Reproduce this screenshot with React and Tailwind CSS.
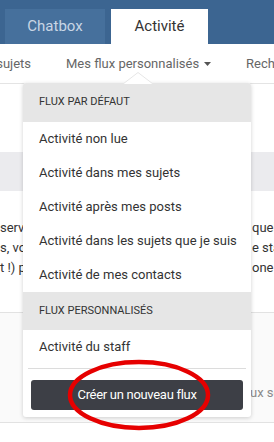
import React from 'react';

export default function App() {
    const defaults = [
        'Activité non lue',
        'Activité dans mes sujets',
        'Activité après mes posts',
        'Activité dans les sujets que je suis',
        'Activité de mes contacts',
    ];

    const lines = [
        ['serve les derniers', 'quelques'],
        ['s, vous pouvez', 'e statut'],
        ['t !) pour', 'one'],
    ];

    return (
        <div className="relative h-[442px] w-[274px] overflow-hidden bg-white font-['Roboto',sans-serif]">
            {/* top tabs */}
            <div className="flex h-[44px] items-end gap-[6px] bg-[#3c6591] pl-[5px]">
                <div className="flex h-[35px] w-[100px] items-center justify-center bg-[#46709c] text-[15px] text-[#c9d6e5]">
                    Chatbox
                </div>
                <div className="flex h-[35px] w-[97px] items-center justify-center bg-white text-[15px] text-[#333]">
                    Activité
                </div>
            </div>

            {/* sub nav */}
            <div className="flex h-[40px] items-center whitespace-nowrap border-b border-[#e4e4e4] text-[13px] text-[#666]">
                <span className="ml-[-32px] w-[98px] shrink-0">Mes sujets</span>
                <span className="flex w-[180px] shrink-0 items-center gap-[5px]">
                    Mes flux personnalisés
                    <svg width="7" height="4" viewBox="0 0 7 4">
                        <path d="M0 0h7L3.5 4z" fill="#555" />
                    </svg>
                </span>
                <span>Recherche</span>
            </div>

            <div className="h-[68px]" />
            <div className="h-[39px] bg-[#ebebee]" />

            <div className="h-[121px] pt-[27px] text-[13px] leading-[20px] text-[#333]">
                {lines.map(([left, right], i) => (
                    <div key={i} className="flex whitespace-nowrap">
                        <span className="w-[252px] shrink-0 overflow-hidden">{left}</span>
                        <span>{right}</span>
                    </div>
                ))}
            </div>

            <div className="h-[111px] whitespace-nowrap border-y border-[#e2e2e2] bg-[#fafafa] pl-[250px] pt-[72px] text-[13px] leading-[16px] text-[#8a8a8a]">
                ux sera
            </div>

            {/* dropdown */}
            <div className="absolute left-[23px] top-[83px] w-[228px] rounded-[3px] bg-white shadow-[0_1px_4px_rgba(0,0,0,0.18)]">
                <svg className="absolute left-[100px] top-[-11px]" width="30" height="12" viewBox="0 0 30 12">
                    <path d="M0 12L15 0.5L30 12" fill="#ffffff" stroke="#e6e6e6" />
                </svg>
                <div className="flex h-[39px] items-center rounded-t-[3px] bg-[#e6e6e6] px-[16px] text-[11px] text-[#333]">
                    FLUX PAR DÉFAUT
                </div>
                {defaults.map((label) => (
                    <div key={label} className="flex h-[34px] items-center whitespace-nowrap px-[16px] text-[13px] text-[#333]">
                        {label}
                    </div>
                ))}
                <div className="flex h-[38px] items-center bg-[#e6e6e6] px-[16px] text-[11px] text-[#333]">
                    FLUX PERSONNALISÉS
                </div>
                <div className="flex h-[34px] items-center px-[16px] text-[13px] text-[#333]">
                    Activité du staff
                </div>
                <div className="mx-[5px] mt-[4px] border-t border-[#dcdcdc]" />
                <div className="px-[8px] pb-[7px] pt-[11px]">
                    <div className="flex h-[30px] items-center justify-center rounded-[3px] bg-[#3d3f46] text-[13px] tracking-[-0.3px] text-white">
                        Créer un nouveau flux
                    </div>
                </div>
            </div>

            {/* red highlight */}
            <svg className="absolute left-[66px] top-[359px]" width="146" height="72" viewBox="0 0 146 72">
                <ellipse cx="73" cy="36" rx="69" ry="33" fill="none" stroke="#e60000" strokeWidth="4.5" />
            </svg>
        </div>
    );
}
